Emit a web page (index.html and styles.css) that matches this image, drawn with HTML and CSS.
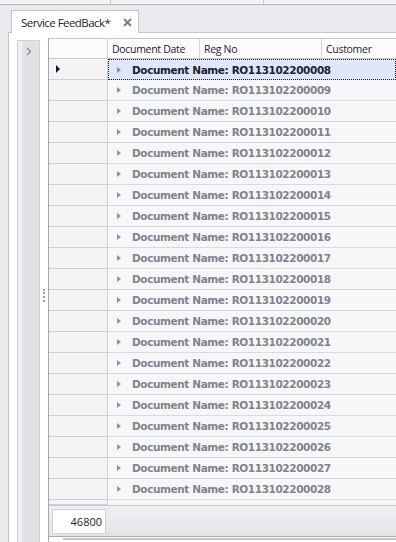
FILE: index.html
```html
<!DOCTYPE html>
<html lang="en">
  <head>
    <meta charset="UTF-8" />
    <title>Service FeedBack</title>
    <link rel="stylesheet" href="styles.css">
  </head>
  <body>
    <div class="top-strip">
      <div class="top-cell first"></div>
      <div class="top-cell second"></div>
    </div>
    <div class="tab-bar">
      <div class="tab">
        <span class="tab-title">Service FeedBack*</span>
        <svg class="tab-close" width="9" height="9" viewBox="0 0 9 9">
          <path d="M1 1 L8 8 M8 1 L1 8" stroke="#7c7f88" stroke-width="2" />
        </svg>
      </div>
    </div>
    <div class="page">
      <div class="side">
        <div class="collapsed-panel">
          <svg class="chevron" width="6" height="9" viewBox="0 0 6 9">
            <path d="M1 1 L4.5 4.5 L1 8" fill="none" stroke="#8a8c94" stroke-width="1.4" />
          </svg>
        </div>
      </div>
      <div class="splitter"><div class="grip"></div></div>
      <div class="grid">
        <div class="header">
          <div class="hcell indicator"></div>
          <div class="hcell col-date">Document Date</div>
          <div class="hcell col-reg">Reg No</div>
          <div class="hcell col-customer">Customer</div>
        </div>
        <div class="rows">
          <div class="row focused">
            <div class="indicator"><span class="pointer"></span></div>
            <div class="group"><span class="expand"></span>Document Name: RO113102200008</div>
          </div>
          <div class="row"><div class="indicator"></div><div class="group"><span class="expand"></span>Document Name: RO113102200009</div></div>
          <div class="row"><div class="indicator"></div><div class="group"><span class="expand"></span>Document Name: RO113102200010</div></div>
          <div class="row"><div class="indicator"></div><div class="group"><span class="expand"></span>Document Name: RO113102200011</div></div>
          <div class="row"><div class="indicator"></div><div class="group"><span class="expand"></span>Document Name: RO113102200012</div></div>
          <div class="row"><div class="indicator"></div><div class="group"><span class="expand"></span>Document Name: RO113102200013</div></div>
          <div class="row"><div class="indicator"></div><div class="group"><span class="expand"></span>Document Name: RO113102200014</div></div>
          <div class="row"><div class="indicator"></div><div class="group"><span class="expand"></span>Document Name: RO113102200015</div></div>
          <div class="row"><div class="indicator"></div><div class="group"><span class="expand"></span>Document Name: RO113102200016</div></div>
          <div class="row"><div class="indicator"></div><div class="group"><span class="expand"></span>Document Name: RO113102200017</div></div>
          <div class="row"><div class="indicator"></div><div class="group"><span class="expand"></span>Document Name: RO113102200018</div></div>
          <div class="row"><div class="indicator"></div><div class="group"><span class="expand"></span>Document Name: RO113102200019</div></div>
          <div class="row"><div class="indicator"></div><div class="group"><span class="expand"></span>Document Name: RO113102200020</div></div>
          <div class="row"><div class="indicator"></div><div class="group"><span class="expand"></span>Document Name: RO113102200021</div></div>
          <div class="row"><div class="indicator"></div><div class="group"><span class="expand"></span>Document Name: RO113102200022</div></div>
          <div class="row"><div class="indicator"></div><div class="group"><span class="expand"></span>Document Name: RO113102200023</div></div>
          <div class="row"><div class="indicator"></div><div class="group"><span class="expand"></span>Document Name: RO113102200024</div></div>
          <div class="row"><div class="indicator"></div><div class="group"><span class="expand"></span>Document Name: RO113102200025</div></div>
          <div class="row"><div class="indicator"></div><div class="group"><span class="expand"></span>Document Name: RO113102200026</div></div>
          <div class="row"><div class="indicator"></div><div class="group"><span class="expand"></span>Document Name: RO113102200027</div></div>
          <div class="row"><div class="indicator"></div><div class="group"><span class="expand"></span>Document Name: RO113102200028</div></div>
          <div class="row partial"><div class="indicator"></div><div class="group"></div></div>
        </div>
        <div class="footer">
          <div class="count-box">46800</div>
        </div>
        <div class="scroll-row">
          <div class="scroll-thumb"></div>
        </div>
      </div>
    </div>
  </body>
</html>
```

FILE: styles.css
```css
body {
  margin: 0;
  width: 396px;
  height: 542px;
  overflow: hidden;
  background: #e9eaee;
  font-family: "DejaVu Sans", Tahoma, sans-serif;
  font-size: 11px;
  display: flex;
  flex-direction: column;
}
.top-strip {
  height: 4px;
  display: flex;
  background: #f3f3f5;
  border-bottom: 1px solid #b6b7bd;
}
.top-cell {
  border-right: 1px solid #c5c6cb;
}
.top-cell.first {
  width: 110px;
}
.top-cell.second {
  width: 152px;
}
.tab-bar {
  height: 27px;
  display: flex;
  align-items: flex-end;
  padding-left: 11px;
}
.tab {
  width: 128px;
  height: 23px;
  background: #fff;
  border: 1px solid #c4c5cb;
  border-bottom: none;
  margin-bottom: -1px;
  position: relative;
  z-index: 1;
  display: flex;
  align-items: center;
  justify-content: space-between;
  padding: 0 6px 0 9px;
  box-sizing: border-box;
}
.tab-title {
  font-family: "Open Sans", "Liberation Sans", sans-serif;
  font-size: 11.5px;
  color: #1e2232;
  letter-spacing: -0.55px;
}
.tab-close {
  display: block;
}
.page {
  flex: 1;
  display: flex;
  margin-left: 8px;
  background: #fff;
  border-top: 1px solid #c4c5cb;
  border-left: 1px solid #c4c5cb;
  min-height: 0;
}
.side {
  width: 31px;
  padding: 7px 0 0 8px;
  box-sizing: border-box;
}
.collapsed-panel {
  width: 23px;
  height: 100%;
  box-sizing: border-box;
  border: 1px solid #cfd0d5;
  border-bottom: none;
  background: linear-gradient(to right, #eeeff2 0, #eeeff2 4px, #e1e2e6 5px);
  display: flex;
  justify-content: center;
  padding-top: 6px;
}
.chevron {
  display: block;
}
.splitter {
  width: 8px;
  display: flex;
  align-items: center;
  justify-content: center;
  padding-top: 16px;
}
.grip {
  width: 2px;
  height: 13px;
  border-left: 2px dotted #9a9ca4;
  box-sizing: border-box;
}
.grid {
  flex: 1;
  margin-top: 5px;
  border-left: 1px solid #a8a9b0;
  border-top: 1px solid #c9cacf;
  display: flex;
  flex-direction: column;
  min-width: 0;
}
.header {
  height: 19px;
  display: flex;
  background: #fbfbfc;
  border-bottom: 1px solid #c9cacf;
  font-family: "Open Sans", "Liberation Sans", sans-serif;
  font-size: 10.5px;
  letter-spacing: -0.3px;
  color: #1e2232;
}
.hcell {
  box-sizing: border-box;
  border-right: 1px solid #d4d5da;
  padding-left: 4px;
  display: flex;
  align-items: center;
  white-space: nowrap;
}
.header .indicator {
  width: 59px;
}
.col-date {
  width: 92px;
}
.col-reg {
  width: 122px;
}
.col-customer {
  flex: 1;
  border-right: none;
}
.rows {
  display: flex;
  flex-direction: column;
}
.row {
  height: 21px;
  display: flex;
  box-sizing: border-box;
}
.row .indicator {
  width: 59px;
  background: #f4f4f7;
  border-right: 1px solid #cfd0d5;
  border-bottom: 1px solid #cfd0d5;
  display: flex;
  align-items: center;
  padding-left: 7px;
  box-sizing: border-box;
}
.pointer {
  width: 0;
  height: 0;
  border-top: 4px solid transparent;
  border-bottom: 4px solid transparent;
  border-left: 4px solid #14161e;
}
.group {
  flex: 1;
  display: flex;
  align-items: center;
  background: #f7f7fa;
  border-bottom: 1px solid #d9dade;
  padding-left: 8px;
  font-weight: bold;
  font-size: 10.5px;
  color: #7e838f;
  white-space: nowrap;
  letter-spacing: -0.4px;
  box-sizing: border-box;
  overflow: hidden;
}
.expand {
  width: 0;
  height: 0;
  border-top: 3.5px solid transparent;
  border-bottom: 3.5px solid transparent;
  border-left: 4px solid #9095a0;
  margin-right: 11px;
  margin-left: 1px;
}
.row.focused .group {
  background: #dfe8f9;
  border: 1px dotted #1c1d22;
  padding-left: 7px;
  color: #1b2036;
}
.row.focused .expand {
  border-left-color: #8a8fa0;
}
.row.partial {
  height: 5px;
}
.row.partial .group {
  border-bottom: none;
}
.footer {
  height: 31px;
  border-top: 1px solid #c9cacf;
  background: linear-gradient(#f0f0f3, #e3e3e7);
  display: flex;
  align-items: center;
  padding-left: 3px;
  box-sizing: border-box;
}
.count-box {
  width: 54px;
  height: 25px;
  box-sizing: border-box;
  background: #fff;
  border: 1px solid #d2d3d7;
  display: flex;
  align-items: center;
  justify-content: flex-end;
  padding-right: 3px;
  font-family: "Open Sans", "Liberation Sans", sans-serif;
  font-size: 11px;
  color: #1e2232;
}
.scroll-row {
  flex: 1;
  border-top: 1px solid #a8a9b0;
  display: flex;
  padding-left: 14px;
}
.scroll-thumb {
  flex: 1;
  height: 2px;
  background: #c2c3c8;
  margin-top: 1px;
}
```
